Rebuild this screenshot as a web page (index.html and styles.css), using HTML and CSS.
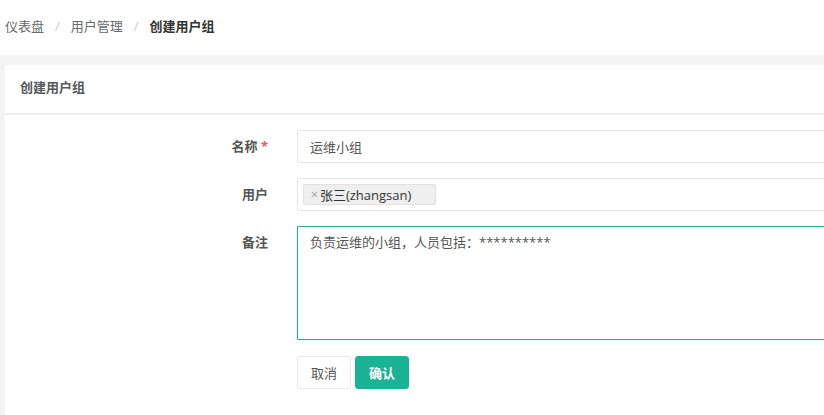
FILE: index.html
```html
<!DOCTYPE html>
<html lang="zh">
<head>
<meta charset="utf-8">
<title>创建用户组</title>
<link rel="stylesheet" href="styles.css">
</head>
<body>
<div class="page">
  <div class="crumbs">
    <span class="crumb">仪表盘</span>
    <span class="sep">/</span>
    <span class="crumb">用户管理</span>
    <span class="sep">/</span>
    <span class="crumb active">创建用户组</span>
  </div>
  <div class="main">
    <div class="card">
      <div class="card-title">创建用户组</div>
      <div class="card-body">
        <div class="row">
          <label class="label">名称 <span class="req">*</span></label>
          <div class="field"><input class="input" type="text" value="运维小组"></div>
        </div>
        <div class="row">
          <label class="label">用户</label>
          <div class="field">
            <div class="input select">
              <span class="tag"><span class="tag-x">×</span>张三(zhangsan)</span>
            </div>
          </div>
        </div>
        <div class="row">
          <label class="label">备注</label>
          <div class="field"><textarea class="input textarea">负责运维的小组，人员包括：**********</textarea></div>
        </div>
        <div class="row actions-row">
          <div></div>
          <div class="actions">
            <button class="btn btn-default">取消</button>
            <button class="btn btn-primary">确认</button>
          </div>
        </div>
      </div>
    </div>
  </div>
</div>
</body>
</html>
```
FILE: styles.css
```css
html, body {
  margin: 0;
  padding: 0;
  overflow: hidden;
  background: #ffffff;
}
body {
  font-family: "Open Sans", "Noto Sans CJK SC", sans-serif;
  font-size: 13px;
  color: #676a6c;
}
.page {
  width: 1100px;
}
.crumbs {
  height: 55px;
  display: flex;
  align-items: center;
  padding-left: 5px;
  padding-bottom: 4px;
  box-sizing: border-box;
  font-size: 13px;
}
.crumb {
  color: #676a6c;
}
.crumb.active {
  color: #333333;
  font-weight: bold;
}
.sep {
  color: #cccccc;
  padding: 0 11px;
}
.main {
  background: #f3f3f4;
  padding: 10px 0 0 5px;
}
.card {
  background: #ffffff;
}
.card-title {
  height: 49px;
  box-sizing: border-box;
  display: flex;
  align-items: center;
  padding: 0 0 5px 15px;
  font-weight: bold;
  color: #555a5c;
  border-bottom: 1px solid #e7eaec;
}
.card-body {
  padding: 15px 0 30px 0;
  border-top: 1px solid #f4f4f4;
}
.row {
  display: grid;
  grid-template-columns: 263px 1fr;
  column-gap: 29px;
  margin-bottom: 15px;
}
.row.actions-row {
  margin-top: 16px;
}
.label {
  text-align: right;
  font-weight: bold;
  color: #555555;
  padding-top: 7px;
  line-height: 18px;
}
.req {
  color: #ed5565;
}
.field {
  min-width: 0;
}
.input {
  display: block;
  box-sizing: border-box;
  width: 100%;
  height: 33px;
  border: 1px solid #e5e6e7;
  border-radius: 1px;
  padding: 6px 12px;
  font-family: inherit;
  font-size: 13px;
  color: #555555;
  background: #ffffff;
  outline: none;
}
.select {
  display: flex;
  align-items: center;
  padding: 0 5px;
}
.tag {
  display: inline-flex;
  align-items: center;
  height: 21px;
  padding: 0 24px 0 7px;
  background: #efefef;
  border: 1px solid #e2e2e2;
  border-radius: 2px;
  color: #333333;
  font-size: 13px;
  box-sizing: border-box;
}
.tag-x {
  color: #999999;
  font-size: 12px;
  margin-right: 2px;
}
.textarea {
  height: 114px;
  resize: none;
  border-color: #1ab394;
  box-shadow: 0 0 2px rgba(26, 179, 148, 0.15);
  line-height: 18px;
  padding-top: 6px;
}
.actions {
  display: flex;
  gap: 4px;
}
.btn {
  height: 33px;
  padding: 0 13px;
  font-family: inherit;
  font-size: 13px;
  border-radius: 3px;
  cursor: pointer;
}
.btn-default {
  background: #ffffff;
  border: 1px solid #e7eaec;
  color: #555555;
}
.btn-primary {
  background: #1ab394;
  border: 1px solid #1ab394;
  color: #ffffff;
  font-weight: bold;
}
```
